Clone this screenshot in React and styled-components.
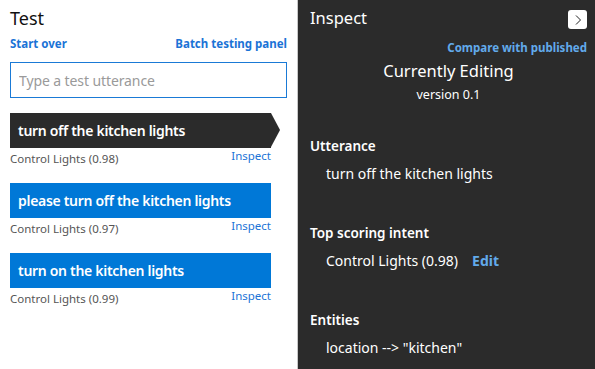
import React from "react";
import styled, { createGlobalStyle } from "styled-components";

const Global = createGlobalStyle`
  html, body { margin: 0; padding: 0; background: #ffffff; }
  body { font-family: "Noto Sans", "Open Sans", sans-serif; }
  * { box-sizing: border-box; }
`;

const Page = styled.div`
  display: flex;
  width: 595px;
  height: 369px;
  overflow: hidden;
`;

const TestPanel = styled.section`
  width: 298px;
  flex: none;
  padding: 6px 10px 0 10px;
  background: #ffffff;
  border-right: 1px solid #c8c8c8;
`;

const Title = styled.h1`
  margin: 0;
  font-size: 18px;
  font-weight: 400;
  line-height: 24px;
  color: #111;
`;

const LinkRow = styled.div`
  display: flex;
  justify-content: space-between;
  margin-top: 6px;
`;

const Link = styled.a`
  font-size: 11.5px;
  font-weight: 700;
  line-height: 16px;
  color: ${(p) => (p.$dark ? "#62aaeb" : "#1b73d6")};
  text-decoration: none;
  cursor: pointer;
`;

const Input = styled.input`
  display: block;
  width: 277px;
  height: 36px;
  margin-top: 10px;
  padding: 0 8px;
  border: 1px solid #1a7ad6;
  outline: none;
  font-family: inherit;
  font-size: 14px;
  letter-spacing: -0.1px;
  color: #222;
  &::placeholder { color: #9a9a9a; }
`;

const List = styled.div`
  display: flex;
  flex-direction: column;
  gap: 15px;
  margin-top: 15px;
`;

const Item = styled.div`
  width: 261px;
`;

const Bubble = styled.div`
  position: relative;
  height: 35px;
  padding-left: 8px;
  display: flex;
  align-items: center;
  font-size: 14px;
  font-weight: 600;
  letter-spacing: -0.3px;
  color: #fff;
  background: ${(p) => (p.$selected ? "#2b2b2b" : "#0078d7")};
  &::after {
    content: "";
    display: ${(p) => (p.$selected ? "block" : "none")};
    position: absolute;
    left: 100%;
    top: 0;
    border-style: solid;
    border-width: 17.5px 0 17.5px 9px;
    border-color: transparent transparent transparent #2b2b2b;
  }
`;

const Meta = styled.div`
  display: flex;
  justify-content: space-between;
  align-items: flex-start;
  height: 20px;
`;

const Intent = styled.span`
  margin-top: 3px;
  font-size: 11.5px;
  line-height: 15px;
  color: #555;
`;

const SmallLink = styled.a`
  font-size: 11.5px;
  line-height: 15px;
  color: #1b73d6;
  cursor: pointer;
`;

const InspectPanel = styled.section`
  flex: 1;
  background: #2b2b2b;
  color: #fff;
  padding: 6px 8px 0 12px;
`;

const Header = styled.div`
  display: flex;
  justify-content: space-between;
  align-items: flex-start;
`;

const PanelTitle = styled.h2`
  margin: 0;
  font-size: 16.5px;
  font-weight: 400;
  line-height: 24px;
`;

const CollapseButton = styled.button`
  margin-top: 4px;
  width: 19px;
  height: 19px;
  padding: 0;
  border: none;
  border-radius: 3px;
  background: #fff;
  display: flex;
  align-items: center;
  justify-content: center;
`;

const CompareRow = styled.div`
  display: flex;
  justify-content: flex-end;
  margin-top: 10px;
`;

const Version = styled.div`
  text-align: center;
  margin-top: 4px;
`;

const VersionTitle = styled.div`
  font-size: 16.5px;
  line-height: 22px;
`;

const VersionNum = styled.div`
  margin-top: 4px;
  font-size: 12.5px;
  line-height: 18px;
`;

const Sections = styled.div`
  display: flex;
  flex-direction: column;
  gap: 40px;
  margin-top: 33px;
`;

const Section = styled.div``;

const Label = styled.div`
  font-size: 13.5px;
  font-weight: 600;
  line-height: 18px;
`;

const Value = styled.div`
  margin-top: 9px;
  padding-left: 16px;
  font-size: 14px;
  line-height: 20px;
  display: flex;
  gap: 14px;
  align-items: baseline;
`;

const EditLink = styled.a`
  font-weight: 700;
  color: #62aaeb;
  cursor: pointer;
`;

const items = [
  { text: "turn off the kitchen lights", intent: "Control Lights (0.98)", selected: true },
  { text: "please turn off the kitchen lights", intent: "Control Lights (0.97)" },
  { text: "turn on the kitchen lights", intent: "Control Lights (0.99)" },
];

export default function App() {
  return (
    <>
      <Global />
      <Page>
        <TestPanel>
          <Title>Test</Title>
          <LinkRow>
            <Link>Start over</Link>
            <Link>Batch testing panel</Link>
          </LinkRow>
          <Input placeholder="Type a test utterance" />
          <List>
            {items.map((it) => (
              <Item key={it.text}>
                <Bubble $selected={it.selected}>{it.text}</Bubble>
                <Meta>
                  <Intent>{it.intent}</Intent>
                  <SmallLink>Inspect</SmallLink>
                </Meta>
              </Item>
            ))}
          </List>
        </TestPanel>
        <InspectPanel>
          <Header>
            <PanelTitle>Inspect</PanelTitle>
            <CollapseButton aria-label="Collapse">
              <svg width="10" height="12" viewBox="0 0 10 12">
                <path d="M3 1.5 L7.5 6 L3 10.5" fill="none" stroke="#222" strokeWidth="1" />
              </svg>
            </CollapseButton>
          </Header>
          <CompareRow>
            <Link $dark>Compare with published</Link>
          </CompareRow>
          <Version>
            <VersionTitle>Currently Editing</VersionTitle>
            <VersionNum>version 0.1</VersionNum>
          </Version>
          <Sections>
            <Section>
              <Label>Utterance</Label>
              <Value>turn off the kitchen lights</Value>
            </Section>
            <Section>
              <Label>Top scoring intent</Label>
              <Value>
                <span>Control Lights (0.98)</span>
                <EditLink>Edit</EditLink>
              </Value>
            </Section>
            <Section>
              <Label>Entities</Label>
              <Value>location --&gt; "kitchen"</Value>
            </Section>
          </Sections>
        </InspectPanel>
      </Page>
    </>
  );
}
